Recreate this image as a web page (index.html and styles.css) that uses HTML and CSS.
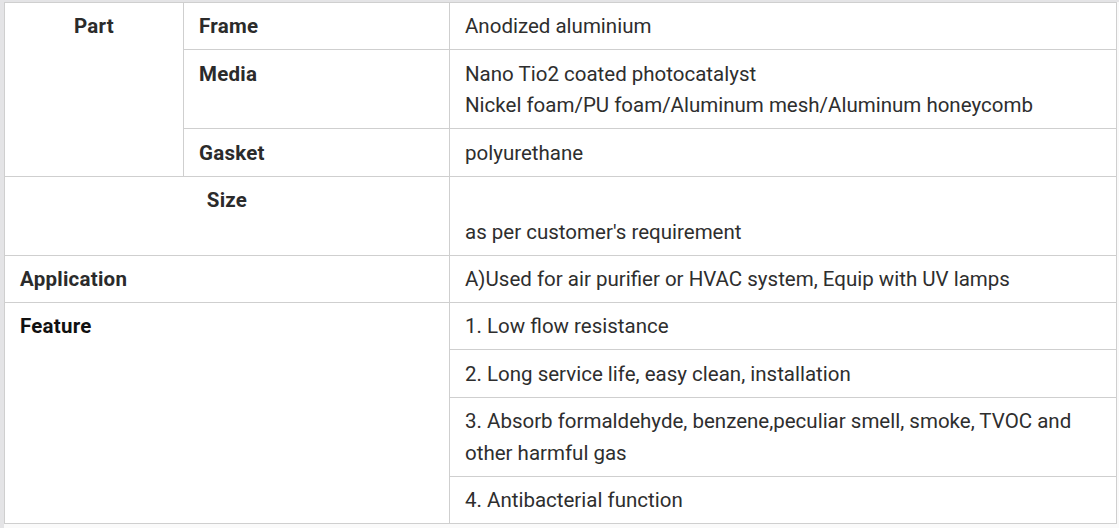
FILE: index.html
```html
<!DOCTYPE html>
<html>
<head>
<meta charset="utf-8">
<link rel="stylesheet" href="styles.css">
</head>
<body>
<div class="page">
<table class="spec">
  <colgroup>
    <col class="c1">
    <col class="c2">
    <col class="c3">
  </colgroup>
  <tbody>
    <tr>
      <th class="center" rowspan="3">Part</th>
      <th>Frame</th>
      <td>Anodized aluminium</td>
    </tr>
    <tr>
      <th>Media</th>
      <td>Nano Tio2 coated photocatalyst<br>Nickel foam/PU foam/Aluminum mesh/Aluminum honeycomb</td>
    </tr>
    <tr>
      <th>Gasket</th>
      <td>polyurethane</td>
    </tr>
    <tr>
      <th class="center" colspan="2">Size</th>
      <td><br>as per customer's requirement</td>
    </tr>
    <tr>
      <th colspan="2">Application</th>
      <td>A)Used for air purifier or HVAC system, Equip with UV lamps</td>
    </tr>
    <tr>
      <th class="dark" colspan="2" rowspan="4">Feature</th>
      <td>1. Low flow resistance</td>
    </tr>
    <tr>
      <td>2. Long service life, easy clean, installation</td>
    </tr>
    <tr>
      <td>3. Absorb formaldehyde, benzene,peculiar smell, smoke, TVOC and other harmful gas</td>
    </tr>
    <tr>
      <td>4. Antibacterial function</td>
    </tr>
  </tbody>
</table>
</div>
</body>
</html>
```

FILE: styles.css
```css
html, body {
  margin: 0;
  padding: 0;
  background: #fafafa;
}
.page {
  padding: 2px 0 4px 4px;
  width: 1115px;
  background: linear-gradient(to right, #e4e4e6 0, #e4e4e6 4px, transparent 4px),
              linear-gradient(to bottom, #e4e4e6 0, #e4e4e6 2px, #fafafa 2px);
}
.spec {
  width: 1112px;
  border-collapse: collapse;
  table-layout: fixed;
  background: #fff;
  font-family: Roboto, "Liberation Sans", sans-serif;
  font-size: 20.5px;
  line-height: 31.6px;
  color: #2e2e2e;
}
.c1 { width: 179px; }
.c2 { width: 266px; }
.c3 { width: 667px; }
.spec th, .spec td {
  border: 1px solid #cfcfcf;
  padding: 8.4px 15px 6.4px;
  vertical-align: top;
  text-align: left;
}
.spec th {
  font-weight: 700;
  letter-spacing: 0.25px;
  color: #2b2b2b;
}
.spec th.center {
  text-align: center;
}
.spec th.dark {
  color: #111;
}
```
